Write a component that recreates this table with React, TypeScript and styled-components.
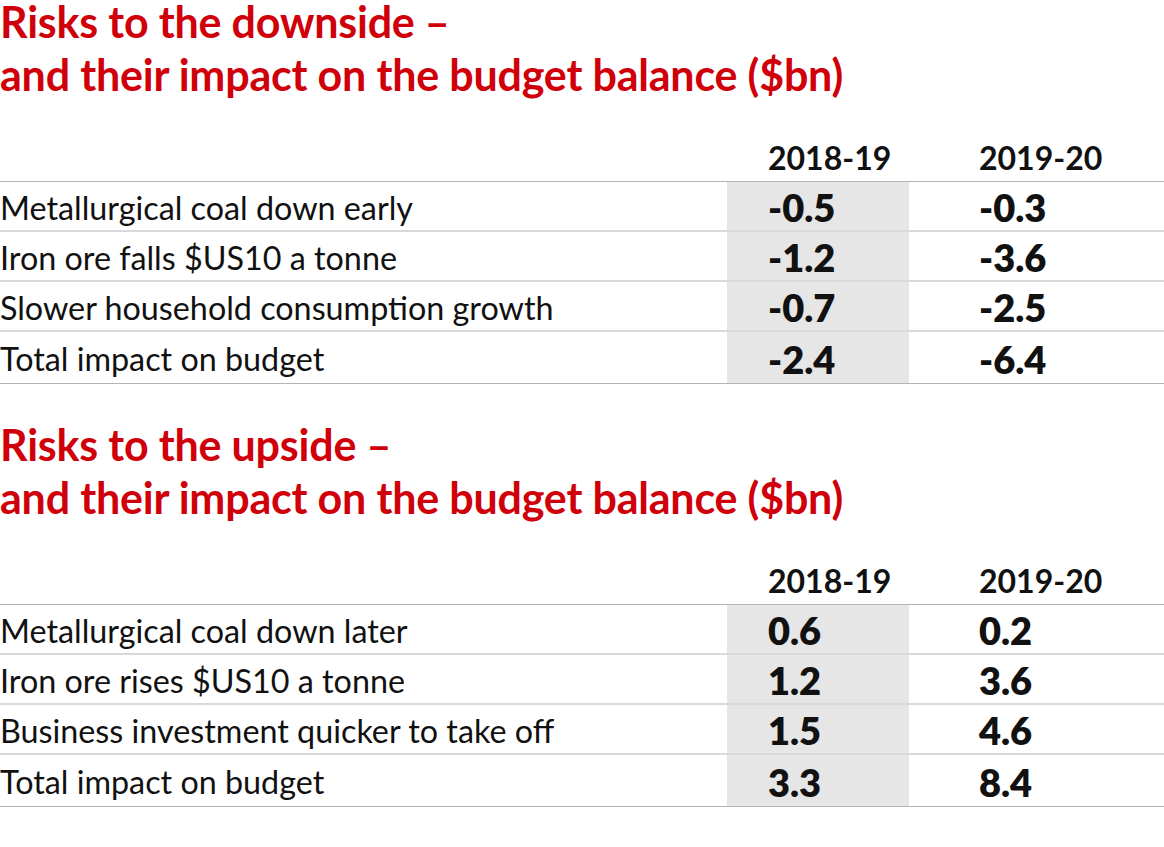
import React from 'react';
import styled, { createGlobalStyle } from 'styled-components';

const Global = createGlobalStyle`
  html, body {
    margin: 0;
    padding: 0;
    background: #ffffff;
  }
  body {
    font-family: Lato, "Open Sans", sans-serif;
    color: #111111;
  }
`;

const Page = styled.div`
  width: 1164px;
  display: flex;
  flex-direction: column;
`;

const Title = styled.h2<{ $top: number }>`
  margin: ${(p) => p.$top}px 0 0 0;
  font-family: Lato, sans-serif;
  font-weight: 700;
  font-size: 43px;
  color: #d0000a;
  letter-spacing: -0.2px;
`;

// first line is tight so the cap sits near the top edge
const TitleLine = styled.div<{ $second?: boolean }>`
  line-height: ${(p) => (p.$second ? 53 : 43)}px;
  margin-top: ${(p) => (p.$second ? 5 : 0)}px;
  white-space: nowrap;
`;

const Table = styled.div`
  margin-top: 32px;
  display: grid;
  grid-template-columns: 727px 182px 1fr;
`;

const HeadCell = styled.div<{ $pad: number }>`
  height: 48px;
  display: flex;
  align-items: center;
  padding-left: ${(p) => p.$pad}px;
  font-size: 32px;
  font-weight: 700;
  border-bottom: 1px solid #b4b4b4;
`;

const Cell = styled.div<{ $shade?: boolean; $pad?: number; $num?: boolean; $last?: boolean }>`
  display: flex;
  align-items: center;
  padding-left: ${(p) => p.$pad ?? 0}px;
  padding-top: 2px;
  box-sizing: border-box;
  background: ${(p) => (p.$shade ? '#e6e6e6' : 'transparent')};
  font-size: ${(p) => (p.$num ? '38px' : '32.3px')};
  font-weight: ${(p) => (p.$num ? 800 : 400)};
  white-space: nowrap;
  border-bottom: ${(p) => (p.$last ? '1px solid #b4b4b4' : '2px solid #d9d9d9')};
  height: ${(p) => (p.$last ? 52 : 50)}px;
`;

type Row = [string, string, string];

const downside: Row[] = [
  ['Metallurgical coal down early', '-0.5', '-0.3'],
  ['Iron ore falls $US10 a tonne', '-1.2', '-3.6'],
  ['Slower household consumption growth', '-0.7', '-2.5'],
  ['Total impact on budget', '-2.4', '-6.4'],
];

const upside: Row[] = [
  ['Metallurgical coal down later', '0.6', '0.2'],
  ['Iron ore rises $US10 a tonne', '1.2', '3.6'],
  ['Business investment quicker to take off', '1.5', '4.6'],
  ['Total impact on budget', '3.3', '8.4'],
];

function RiskTable({ rows }: { rows: Row[] }) {
  return (
    <Table>
      <HeadCell $pad={0} />
      <HeadCell $pad={41}>2018-19</HeadCell>
      <HeadCell $pad={70}>2019-20</HeadCell>
      {rows.map((r, i) => {
        const last = i === rows.length - 1;
        return (
          <React.Fragment key={r[0]}>
            <Cell $last={last}>{r[0]}</Cell>
            <Cell $last={last} $shade $num $pad={41}>{r[1]}</Cell>
            <Cell $last={last} $num $pad={70}>{r[2]}</Cell>
          </React.Fragment>
        );
      })}
    </Table>
  );
}

function RiskTitle({ lead, top }: { lead: string; top: number }) {
  return (
    <Title $top={top}>
      <TitleLine>{lead}</TitleLine>
      <TitleLine $second>and their impact on the budget balance ($bn)</TitleLine>
    </Title>
  );
}

export default function App() {
  return (
    <Page>
      <Global />
      <RiskTitle lead="Risks to the downside –" top={0} />
      <RiskTable rows={downside} />
      <RiskTitle lead="Risks to the upside –" top={39} />
      <RiskTable rows={upside} />
    </Page>
  );
}
